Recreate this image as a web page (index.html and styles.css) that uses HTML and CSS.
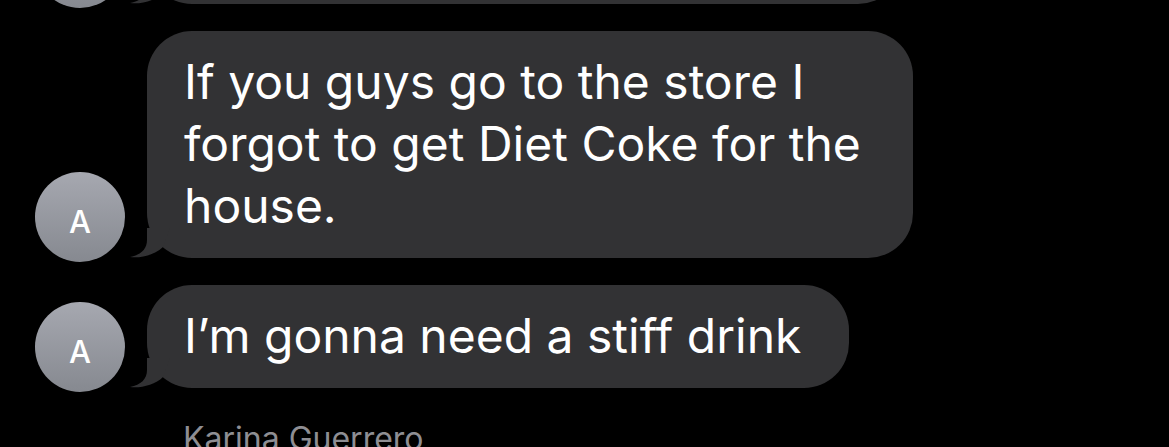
FILE: index.html
```html
<!DOCTYPE html>
<html lang="en">
<head>
  <meta charset="UTF-8">
  <title>Messages</title>
  <link rel="stylesheet" href="styles.css">
</head>
<body>

  <div class="thread">
    <!-- mensaje anterior, casi fuera de la pantalla -->
    <div class="msg msg-prev">
      <div class="avatar"></div>
      <div class="bubble bubble-prev"></div>
    </div>

    <div class="msg">
      <div class="avatar">A</div>
      <div class="bubble">If you guys go to the store I forgot to get Diet Coke for the house.</div>
    </div>

    <div class="msg">
      <div class="avatar">A</div>
      <div class="bubble">I’m gonna need a stiff drink</div>
    </div>

    <div class="sender">Karina Guerrero</div>
  </div>

</body>
</html>
```

FILE: styles.css
```css
body {
  margin: 0;
  background-color: #000;
  font-family: Inter, "Noto Sans", sans-serif;
  color: #fff;
  overflow: hidden;
}

.thread {
  display: flex;
  flex-direction: column;
  gap: 27px;
  padding-left: 35px;
}

.msg {
  display: flex;
  align-items: flex-end;
  gap: 22px;
}

.msg-prev {
  margin-top: -96px;
}

.avatar {
  width: 90px;
  height: 90px;
  flex-shrink: 0;
  margin-bottom: -4px;
  border-radius: 50%;
  background: linear-gradient(#a6a8b0, #868990);
  display: flex;
  align-items: center;
  justify-content: center;
  padding-top: 8px;
  box-sizing: border-box;
  font-size: 31px;
  font-weight: 500;
  color: #fff;
}

.bubble {
  position: relative;
  max-width: 766px;
  box-sizing: border-box;
  padding: 20px 48px 21px 37px;
  background-color: #323234;
  border-radius: 45px;
  font-size: 48px;
  line-height: 62px;
}

/* la colita del globo */
.bubble::before {
  content: "";
  position: absolute;
  left: -17px;
  bottom: 0;
  width: 40px;
  height: 30px;
  background: url("data:image/svg+xml,%3Csvg xmlns='http://www.w3.org/2000/svg' width='40' height='30' viewBox='0 0 40 30'%3E%3Cpath d='M17 0 L17 12 C17 21 11 27 0 29 C10 30.5 25 27 33 19 L40 0 Z' fill='%23323234'/%3E%3C/svg%3E") no-repeat;
}

.bubble-prev {
  width: 756px;
  height: 100px;
}

.sender {
  margin-top: 4px;
  padding-left: 148px;
  font-size: 32px;
  color: #8e8e93;
}
```
